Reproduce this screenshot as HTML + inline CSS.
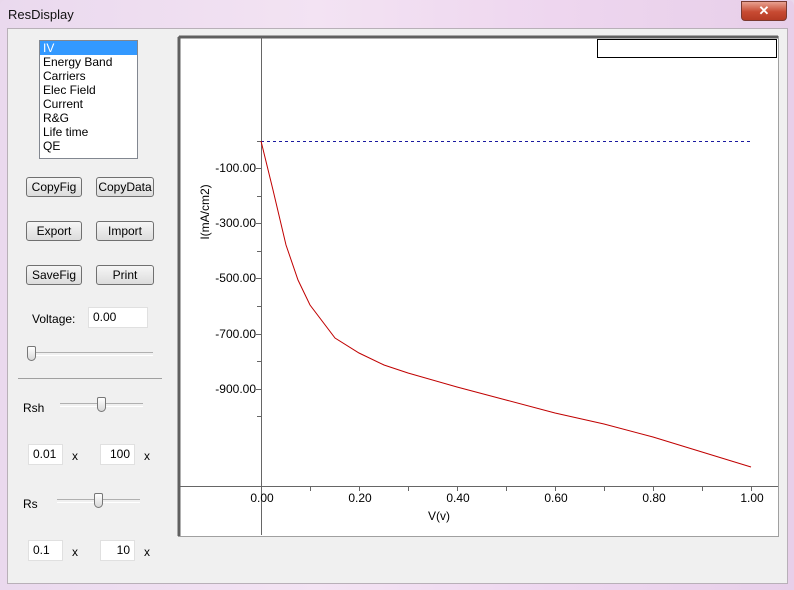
<!DOCTYPE html>
<html><head><style>
body{margin:0;width:794px;height:590px;overflow:hidden;font-family:"Liberation Sans",sans-serif;font-size:12px;background:#e9d8ec}
.win{position:absolute;left:0;top:0;width:794px;height:590px;background:linear-gradient(90deg,#ead9ee,#f3e3f3 40%,#eed6ef 70%,#e7cfe9);border-radius:6px 6px 0 0}
.title{position:absolute;left:8px;top:7px;font-size:13px;color:#111}
.close{position:absolute;left:741px;top:1px;width:44px;height:18px;background:linear-gradient(#e8a090,#c74a32 55%,#b53a24);border:1px solid #7a3a30;border-radius:0 0 4px 4px;color:#fff;text-align:center;font-weight:bold;font-size:13px;line-height:17px}
.client{position:absolute;left:7px;top:28px;width:779px;height:554px;background:#f0f0f0;border:1px solid #b8b0b8}
.abs{position:absolute}
.list{left:39px;top:40px;width:99px;height:119px;background:#fff;border:1px solid #828790;box-sizing:border-box}
.list div{height:14px;line-height:14px;padding-left:3px;font-size:12px}
.btn{position:absolute;width:56px;height:20px;border:1px solid #707070;border-radius:3px;background:linear-gradient(#f6f6f6,#dcdcdc);box-sizing:border-box;text-align:center;line-height:18px;font-size:12px}
.edit{position:absolute;background:#fff;border:1px solid #e0e0e0;box-sizing:border-box;height:21px;line-height:19px;font-size:12px;padding:0 4px}
.track{position:absolute;height:2px;border-top:1px solid #b0b0b0;border-bottom:1px solid #fff}
.thumb{position:absolute;width:9px;height:15px;border:1px solid #777;border-radius:2px 2px 5px 5px;background:linear-gradient(#fff,#d8d8d8);box-sizing:border-box}
</style></head><body>
<div class="win">
<div class="title">ResDisplay</div>
<div class="close">✕</div>
<div class="client"></div>
<div class="abs list">
<div style="background:#3399ff;color:#fff">IV</div><div>Energy Band</div><div>Carriers</div><div>Elec Field</div><div>Current</div><div>R&amp;G</div><div>Life time</div><div>QE</div>
</div>
<div class="btn" style="left:26px;top:177px">CopyFig</div>
<div class="btn" style="left:96px;top:177px;width:58px">CopyData</div>
<div class="btn" style="left:26px;top:221px">Export</div>
<div class="btn" style="left:96px;top:221px;width:58px">Import</div>
<div class="btn" style="left:26px;top:265px">SaveFig</div>
<div class="btn" style="left:96px;top:265px;width:58px">Print</div>
<div class="abs" style="left:32px;top:312px">Voltage:</div>
<div class="edit" style="left:88px;top:307px;width:60px">0.00</div>
<div class="track" style="left:28px;top:352px;width:125px"></div>
<div class="thumb" style="left:27px;top:346px"></div>
<div class="abs" style="left:18px;top:378px;width:144px;border-top:1px solid #a0a0a0"></div>
<div class="abs" style="left:23px;top:401px">Rsh</div>
<div class="track" style="left:60px;top:403px;width:83px"></div>
<div class="thumb" style="left:97px;top:397px"></div>
<div class="edit" style="left:28px;top:444px;width:35px">0.01</div>
<div class="abs" style="left:72px;top:449px">x</div>
<div class="edit" style="left:100px;top:444px;width:35px;text-align:right">100</div>
<div class="abs" style="left:144px;top:449px">x</div>
<div class="abs" style="left:23px;top:497px">Rs</div>
<div class="track" style="left:57px;top:499px;width:83px"></div>
<div class="thumb" style="left:94px;top:493px"></div>
<div class="edit" style="left:28px;top:540px;width:35px">0.1</div>
<div class="abs" style="left:72px;top:545px">x</div>
<div class="edit" style="left:100px;top:540px;width:35px;text-align:right">10</div>
<div class="abs" style="left:144px;top:545px">x</div>
<svg class="abs" style="left:0;top:0" width="794" height="590">
<rect x="178.5" y="36.5" width="600" height="500" fill="#fff" stroke="#a0a0a0"/>
<path d="M179 37V536M179 37H778" stroke="#606060" stroke-width="3" fill="none"/>
<rect x="597.5" y="39.5" width="179" height="18" fill="#fff" stroke="#000"/>
<line x1="261.5" y1="37" x2="261.5" y2="535" stroke="#666"/>
<line x1="180" y1="486.5" x2="778" y2="486.5" stroke="#666"/>
<g stroke="#666">
<path d="M256 168.5h5M256 223.5h5M256 278.5h5M256 334.5h5M256 389.5h5M257 196.5h4M257 251.5h4M257 306.5h4M257 361.5h4M257 416.5h4M257 141.5h4"/>
<path d="M310.5 486v5M359.5 486v5M408.5 486v5M457.5 486v5M506.5 486v5M555.5 486v5M604.5 486v5M653.5 486v5M702.5 486v5M751.5 486v5"/>
</g>
<g font-family="Liberation Sans,sans-serif" font-size="12" fill="#000" text-anchor="end">
<text x="256" y="172">-100.00</text><text x="256" y="227">-300.00</text><text x="256" y="282">-500.00</text><text x="256" y="338">-700.00</text><text x="256" y="393">-900.00</text>
</g>
<g font-family="Liberation Sans,sans-serif" font-size="12" text-anchor="middle">
<text x="262" y="502">0.00</text><text x="360" y="502">0.20</text><text x="458" y="502">0.40</text><text x="556" y="502">0.60</text><text x="654" y="502">0.80</text><text x="752" y="502">1.00</text>
<text x="439" y="520">V(v)</text>
<text transform="translate(209,212) rotate(-90)">I(mA/cm2)</text>
</g>
<line x1="261" y1="141.5" x2="751" y2="141.5" stroke="#1a1aa0" stroke-dasharray="3,3"/>
<polyline fill="none" stroke="#c00000" points="261,141 273,190 286,245 298,280 310,305 335,338 359,353 384,365 408,373 457,387 506,400 555,413 604,424 653,437 702,452 751,467"/>
</svg>
</div>
</body></html>
